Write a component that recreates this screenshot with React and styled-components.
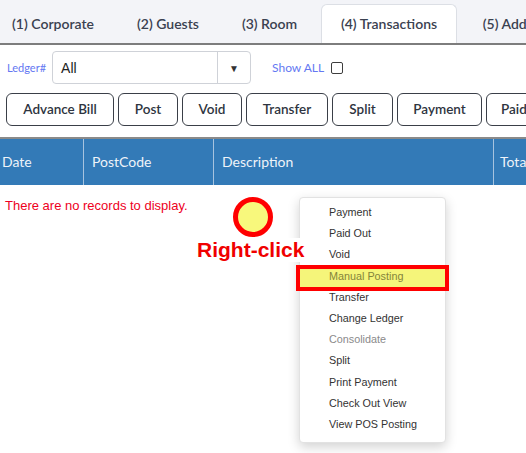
import React from "react";
import styled, { createGlobalStyle } from "styled-components";

const GlobalStyle = createGlobalStyle`
  html, body { margin: 0; padding: 0; background: #fff; }
  body { width: 526px; height: 453px; overflow: hidden; position: relative; }
  * { box-sizing: border-box; }
`;

const UI_FONT = `"Lato", "Noto Sans", sans-serif`;
const ARIAL = `"Liberation Sans", Arial, sans-serif`;

const Page = styled.div`
  position: relative;
  width: 526px;
  height: 453px;
  overflow: hidden;
  font-family: ${UI_FONT};
`;

const TabBar = styled.div`
  display: flex;
  align-items: flex-end;
  height: 45px;
  background: #f3f4f8;
  border-bottom: 2px solid #7d7d7d;
  margin-left: -10px;
`;

const Tab = styled.div`
  flex: 0 0 ${(p) => p.$w}px;
  height: 39px;
  margin-right: 2px;
  display: flex;
  align-items: center;
  justify-content: center;
  white-space: nowrap;
  font-size: 14px;
  font-weight: 600;
  color: #3a4150;
  border: 1px solid ${(p) => (p.$active ? "#dcdfe5" : "transparent")};
  border-bottom: none;
  border-radius: 6px 6px 0 0;
  background: ${(p) => (p.$active ? "#fff" : "transparent")};
  padding-bottom: 1px;
`;

const FilterRow = styled.div`
  display: flex;
  align-items: center;
  height: 33px;
  margin-top: 6px;
  padding-left: 7px;
`;

const LedgerLabel = styled.span`
  font-size: 11px;
  color: #6478f2;
  margin-right: 6px;
`;

const Select = styled.div`
  display: flex;
  width: 199px;
  height: 33px;
  border: 1px solid #cfd2d8;
  border-radius: 4px;
  background: #fff;
`;

const SelectValue = styled.div`
  flex: 1;
  display: flex;
  align-items: center;
  padding-left: 8px;
  font-family: ${ARIAL};
  font-size: 14px;
  color: #222;
  border-right: 1px solid #cfd2d8;
`;

const SelectArrow = styled.div`
  width: 32px;
  display: flex;
  align-items: center;
  justify-content: center;
  font-size: 10px;
  color: #333;
`;

const ShowAll = styled.label`
  display: flex;
  align-items: center;
  margin-left: 21px;
  font-size: 12px;
  color: #6478f2;
`;

const Check = styled.span`
  display: inline-block;
  width: 12px;
  height: 12px;
  margin-left: 7px;
  border: 1.5px solid #3d3d3d;
  border-radius: 2px;
`;

const ButtonRow = styled.div`
  display: flex;
  gap: 4px;
  margin-top: 9px;
  padding-left: 6px;
  height: 33px;
`;

const ActionButton = styled.button`
  flex: 0 0 ${(p) => p.$w}px;
  height: 33px;
  padding: 0 0 1px;
  border: 1px solid #3a3f48;
  border-radius: 6px;
  background: #fff;
  font-family: ${UI_FONT};
  font-size: 13.5px;
  font-weight: 600;
  color: #2e3440;
  white-space: nowrap;
  overflow: hidden;
  text-align: ${(p) => (p.$cut ? "left" : "center")};
  padding-left: ${(p) => (p.$cut ? "14px" : "0")};
`;

const Table = styled.div`
  margin-top: 11px;
  border-top: 2px solid #8a8a8a;
`;

const HeaderRow = styled.div`
  display: grid;
  grid-template-columns: 83px 130px 280px 1fr;
  height: 46px;
  background: #337ab7;
`;

const HeaderCell = styled.div`
  display: flex;
  align-items: center;
  padding-left: ${(p) => p.$pad}px;
  padding-bottom: 1px;
  font-size: 14px;
  color: #eef3f9;
  border-left: ${(p) => (p.$first ? "none" : "1px solid #a7c3df")};
  white-space: nowrap;
  overflow: hidden;
`;

const EmptyMessage = styled.div`
  padding: 13px 0 0 5px;
  font-family: ${ARIAL};
  font-size: 13px;
  color: #ee0022;
`;

const ClickMarker = styled.div`
  position: absolute;
  left: 233px;
  top: 197px;
  width: 40px;
  height: 40px;
  border-radius: 50%;
  border: 5px solid #ff0000;
  background: #f8f87c;
`;

const ClickLabel = styled.div`
  position: absolute;
  z-index: 2;
  left: 197px;
  top: 238px;
  padding-right: 1px;
  font-family: ${ARIAL};
  font-weight: 700;
  font-size: 21px;
  color: #f00000;
  background: #fff;
`;

const Menu = styled.ul`
  position: absolute;
  z-index: 1;
  left: 299px;
  top: 197px;
  width: 147px;
  margin: 0;
  padding: 4px 0 7px;
  list-style: none;
  background: #fff;
  border: 1px solid #e2e2e2;
  border-radius: 4px;
  box-shadow: 0 4px 12px rgba(0, 0, 0, 0.18);
`;

const MenuItem = styled.li`
  position: relative;
  height: 21.2px;
  line-height: 21.2px;
  padding-left: 29px;
  font-family: ${ARIAL};
  font-size: 10.8px;
  color: ${(p) => (p.$disabled ? "#8a8a8a" : p.$marked ? "#84843a" : "#333")};
  white-space: nowrap;
`;

const Highlight = styled.span`
  position: absolute;
  left: -4px;
  right: -4px;
  top: -1px;
  bottom: -4px;
  border: 4px solid #ff0000;
  background: #f5f57a;
  z-index: 0;
`;

const ItemText = styled.span`
  position: relative;
  z-index: 1;
`;

const tabs = [
  { label: "(1) Corporate", w: 126 },
  { label: "(2) Guests", w: 100 },
  { label: "(3) Room", w: 99 },
  { label: "(4) Transactions", w: 136, active: true },
  { label: "(5) Additional", w: 130 },
];

const buttons = [
  { label: "Advance Bill", w: 108 },
  { label: "Post", w: 60 },
  { label: "Void", w: 60 },
  { label: "Transfer", w: 82 },
  { label: "Split", w: 61 },
  { label: "Payment", w: 85 },
  { label: "Paid Out", w: 80, cut: true },
];

const menuItems = [
  { label: "Payment" },
  { label: "Paid Out" },
  { label: "Void" },
  { label: "Manual Posting", marked: true },
  { label: "Transfer" },
  { label: "Change Ledger" },
  { label: "Consolidate", disabled: true },
  { label: "Split" },
  { label: "Print Payment" },
  { label: "Check Out View" },
  { label: "View POS Posting" },
];

export default function App() {
  return (
    <Page>
      <GlobalStyle />
      <TabBar>
        {tabs.map((t) => (
          <Tab key={t.label} $w={t.w} $active={t.active}>
            {t.label}
          </Tab>
        ))}
      </TabBar>
      <FilterRow>
        <LedgerLabel>Ledger#</LedgerLabel>
        <Select>
          <SelectValue>All</SelectValue>
          <SelectArrow>▼</SelectArrow>
        </Select>
        <ShowAll>
          Show ALL
          <Check />
        </ShowAll>
      </FilterRow>
      <ButtonRow>
        {buttons.map((b) => (
          <ActionButton key={b.label} $w={b.w} $cut={b.cut}>
            {b.label}
          </ActionButton>
        ))}
      </ButtonRow>
      <Table>
        <HeaderRow>
          <HeaderCell $first $pad={2}>Date</HeaderCell>
          <HeaderCell $pad={8}>PostCode</HeaderCell>
          <HeaderCell $pad={8}>Description</HeaderCell>
          <HeaderCell $pad={6}>Total</HeaderCell>
        </HeaderRow>
        <EmptyMessage>There are no records to display.</EmptyMessage>
      </Table>
      <ClickMarker />
      <ClickLabel>Right-click</ClickLabel>
      <Menu>
        {menuItems.map((m) => (
          <MenuItem key={m.label} $disabled={m.disabled} $marked={m.marked}>
            {m.marked && <Highlight />}
            <ItemText>{m.label}</ItemText>
          </MenuItem>
        ))}
      </Menu>
    </Page>
  );
}
